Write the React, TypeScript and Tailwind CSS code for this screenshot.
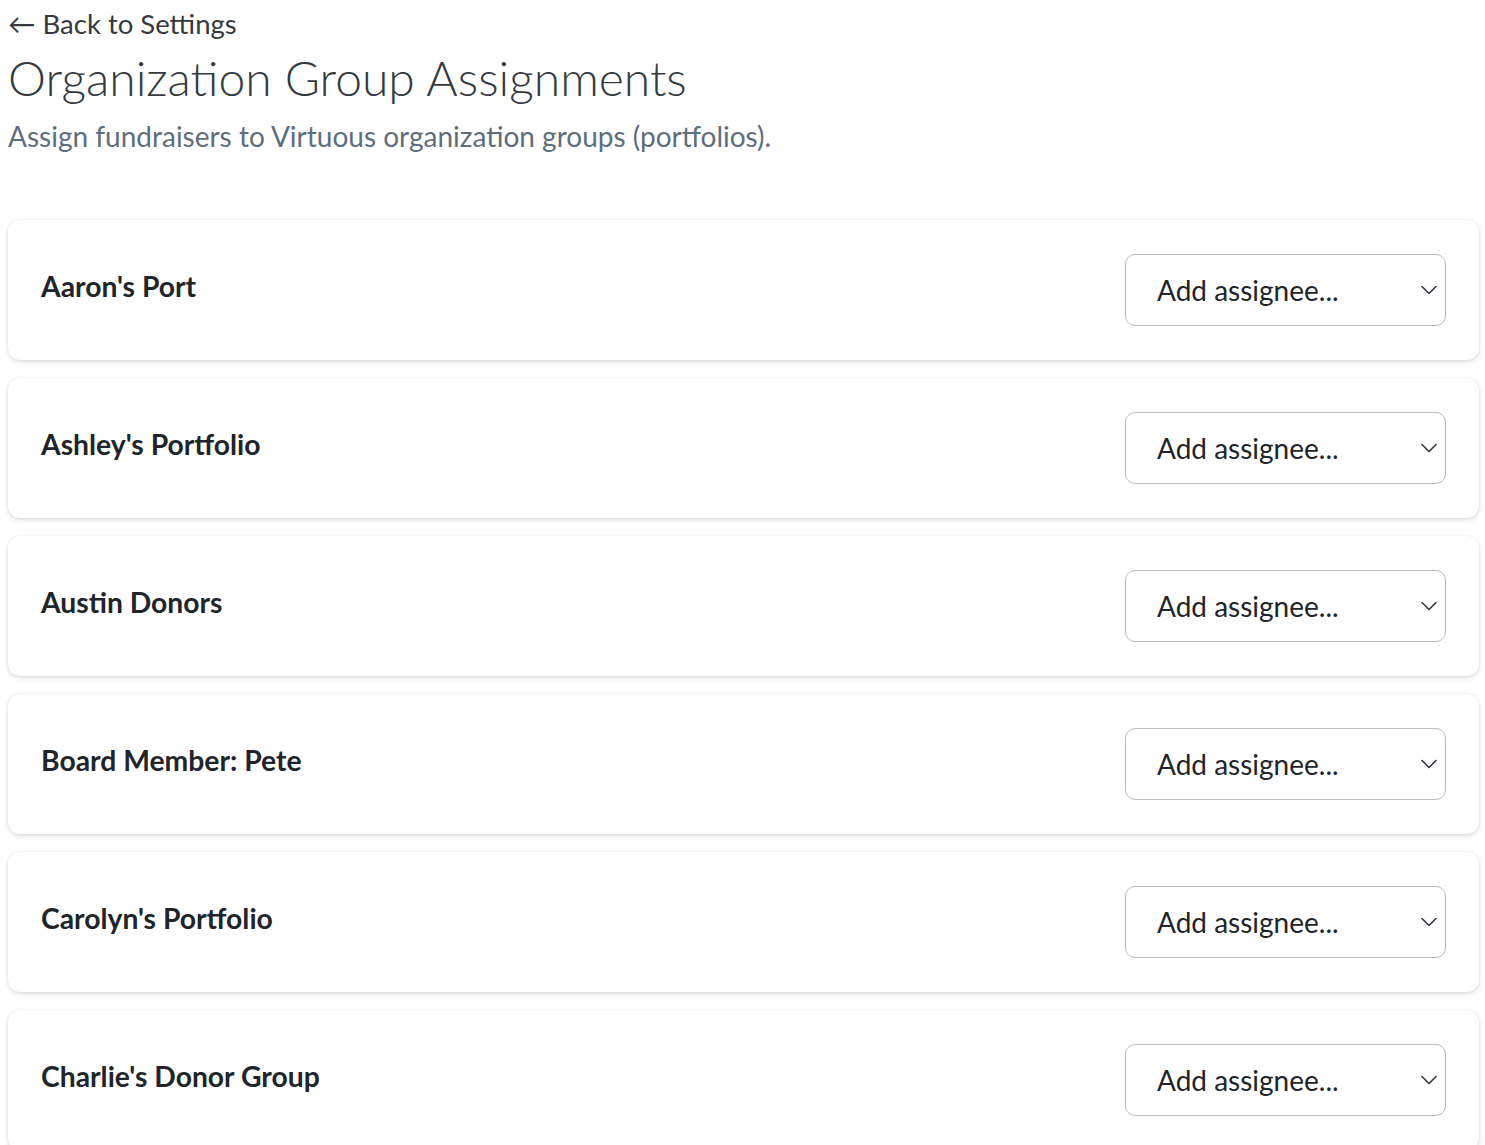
import { useState } from 'react';

const GROUPS = [
  "Aaron's Port",
  "Ashley's Portfolio",
  'Austin Donors',
  'Board Member: Pete',
  "Carolyn's Portfolio",
  "Charlie's Donor Group",
  "Dana's Portfolio",
];

function AssigneeSelect() {
  const [value, setValue] = useState('');
  return (
    <div className="relative w-[321px] shrink-0">
      <select
        value={value}
        onChange={(e) => setValue(e.target.value)}
        className="w-full h-[72px] appearance-none bg-white border-[1.5px] border-[#b8bdc2] rounded-[10px] pl-[31px] pr-12 text-[28px] text-[#212529] outline-none"
      >
        <option value="">Add assignee...</option>
        <option value="a">Alex Morgan</option>
        <option value="b">Jamie Lee</option>
      </select>
      <svg
        className="pointer-events-none absolute right-[9px] top-1/2 -translate-y-1/2"
        width="16"
        height="10"
        viewBox="0 0 16 10"
        fill="none"
      >
        <path d="M1 1.5l7 7 7-7" stroke="#343a40" strokeWidth="1.6" strokeLinecap="round" strokeLinejoin="round" />
      </svg>
    </div>
  );
}

export default function App() {
  return (
    <div className="min-h-screen bg-white px-2 font-['Lato',sans-serif] text-[#212529]">
      <a href="#" className="block pt-[7px] text-[27.5px] leading-[34px] text-[#343a40]">
        ← Back to Settings
      </a>
      <h1 className="mt-[8px] text-[48px] leading-[58px] font-light text-[#343a40]">
        Organization Group Assignments
      </h1>
      <p className="mt-[12px] text-[28px] leading-[34px] text-[#5f6e7c]">
        Assign fundraisers to Virtuous organization groups (portfolios).
      </p>

      <div className="mt-[67px] flex flex-col gap-[18px]">
        {GROUPS.map((name) => (
          <div
            key={name}
            className="flex items-center justify-between rounded-[12px] bg-white pl-[33px] pr-[33px] py-[34px] shadow-[0_2px_5px_rgba(0,0,0,0.13),0_0_2px_rgba(0,0,0,0.08)] mr-[-2px]"
          >
            <span className="-mt-[8px] text-[28.3px] font-bold text-[#212529]">{name}</span>
            <AssigneeSelect />
          </div>
        ))}
      </div>
    </div>
  );
}
